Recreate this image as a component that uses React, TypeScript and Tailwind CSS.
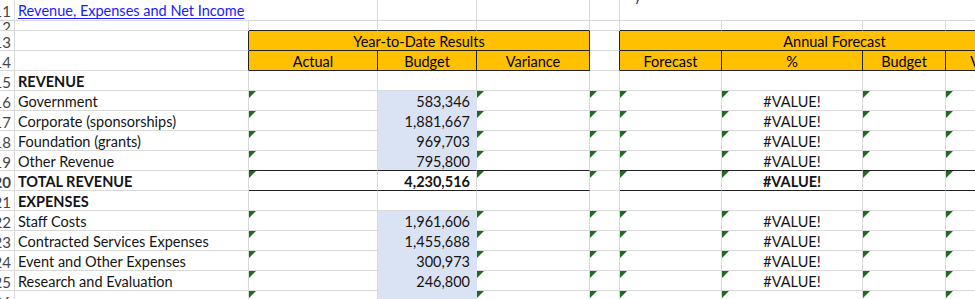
import React from "react";

const GRID =
  "grid grid-cols-[15px_234px_129px_99px_113px_30px_102px_141px_83px_104px]";

function Tri() {
  return (
    <svg
      width="7"
      height="7"
      viewBox="0 0 7 7"
      className="absolute left-0 top-0"
    >
      <polygon points="0,0 7,0 0,7" fill="#1d6b1d" />
    </svg>
  );
}

type CellProps = {
  children?: React.ReactNode;
  className?: string;
  tri?: boolean;
};

function Cell({ children, className = "", tri }: CellProps) {
  return (
    <div
      className={`relative flex items-center pt-[3px] overflow-hidden whitespace-nowrap ${className}`}
    >
      {tri && <Tri />}
      {children}
    </div>
  );
}

function RowNum({ n }: { n: number }) {
  return (
    <Cell className="justify-end pr-[3px] text-[15px] text-[#444] border-r border-b border-[#d9d9d9]">
      {n}
    </Cell>
  );
}

const G = "border-r border-b border-[#d9d9d9]";

function DataRow({
  n,
  label,
  budget,
  value,
}: {
  n: number;
  label: string;
  budget: string;
  value: string;
}) {
  return (
    <div className={`${GRID} h-[20px]`}>
      <RowNum n={n} />
      <Cell className={`${G} pl-[3px]`}>{label}</Cell>
      <Cell className={G} tri />
      <Cell className="justify-end pr-[6px] bg-[#dae3f3] border-r border-b border-[#dae3f3]">
        {budget}
      </Cell>
      <Cell className={G} tri />
      <Cell className={G} tri />
      <Cell className={G} tri />
      <Cell className={`${G} justify-center`} tri>
        {value}
      </Cell>
      <Cell className={G} tri />
      <Cell className={G} tri />
    </div>
  );
}

export default function App() {
  const revenue = [
    { n: 16, label: "Government", budget: "583,346" },
    { n: 17, label: "Corporate (sponsorships)", budget: "1,881,667" },
    { n: 18, label: "Foundation (grants)", budget: "969,703" },
  ];
  const expenses = [
    { n: 22, label: "Staff Costs", budget: "1,961,606" },
    { n: 23, label: "Contracted Services Expenses", budget: "1,455,688" },
    { n: 24, label: "Event and Other Expenses", budget: "300,973" },
    { n: 25, label: "Research and Evaluation", budget: "246,800" },
  ];
  const K = "border-r border-b border-[#d9d9d9] border-b-[#222]";
  const H = "bg-[#ffc000] border-r border-b border-[#222] justify-center text-black";

  return (
    <div className="w-[975px] h-[299px] overflow-hidden bg-white font-['Lato'] text-[14.5px] text-[#141414] leading-none">
      {/* row 11 */}
      <div className={`${GRID} h-[21px]`}>
        <RowNum n={11} />
        <Cell className="border-b border-[#d9d9d9] pl-[3px] overflow-visible">
          <span className="text-[#1a1aff] underline underline-offset-2">
            Revenue, Expenses and Net Income
          </span>
        </Cell>
        <Cell className={G} />
        <Cell className={G} />
        <Cell className={G} />
        <Cell className={G} />
        <Cell className="border-b border-[#d9d9d9] items-start">
          <span className="block -mt-[14px] ml-[14px] text-[#333]">y</span>
        </Cell>
        <Cell className="border-b border-[#d9d9d9]" />
        <Cell className="border-b border-[#d9d9d9]" />
        <Cell className="border-b border-[#d9d9d9]" />
      </div>
      {/* row 12 */}
      <div className={`${GRID} h-[10px]`}>
        <RowNum n={12} />
        <Cell className={G} />
        <Cell className={K} />
        <Cell className={K} />
        <Cell className={K} />
        <Cell className={G} />
        <Cell className={K} />
        <Cell className={K} />
        <Cell className={K} />
        <Cell className={K} />
      </div>
      {/* row 13 */}
      <div className={`${GRID} h-[20px]`}>
        <RowNum n={13} />
        <Cell className="border-r border-b border-[#d9d9d9] border-r-[#222]" />
        <Cell className={`${H} col-span-3`}>Year-to-Date Results</Cell>
        <Cell className="border-r border-b border-[#d9d9d9] border-r-[#222]" />
        <Cell className={`${H} col-span-4`}>Annual Forecast</Cell>
      </div>
      {/* row 14 */}
      <div className={`${GRID} h-[20px]`}>
        <RowNum n={14} />
        <Cell className="border-r border-b border-[#d9d9d9] border-r-[#222]" />
        <Cell className={H}>Actual</Cell>
        <Cell className={H}>Budget</Cell>
        <Cell className={H}>Variance</Cell>
        <Cell className="border-r border-b border-[#d9d9d9] border-r-[#222]" />
        <Cell className={H}>Forecast</Cell>
        <Cell className={H}>%</Cell>
        <Cell className={H}>Budget</Cell>
        <Cell className={H}>Variance</Cell>
      </div>
      {/* row 15 */}
      <div className={`${GRID} h-[20px]`}>
        <RowNum n={15} />
        <Cell className={`${G} pl-[3px] font-bold`}>REVENUE</Cell>
        <Cell className={G} />
        <Cell className={G} />
        <Cell className={G} />
        <Cell className={G} />
        <Cell className={G} />
        <Cell className={G} />
        <Cell className={G} />
        <Cell className={G} />
      </div>
      {revenue.map((r) => (
        <DataRow key={r.n} {...r} value="#VALUE!" />
      ))}
      {/* row 19 */}
      <div className={`${GRID} h-[20px]`}>
        <RowNum n={19} />
        <Cell className={`${G} pl-[3px]`}>Other Revenue</Cell>
        <Cell className={K} tri />
        <Cell className="justify-end pr-[6px] bg-[#dae3f3] border-r border-b border-[#dae3f3] border-b-[#222]">
          795,800
        </Cell>
        <Cell className={K} tri />
        <Cell className={G} tri />
        <Cell className={K} tri />
        <Cell className={`${K} justify-center`} tri>
          #VALUE!
        </Cell>
        <Cell className={K} tri />
        <Cell className={K} tri />
      </div>
      {/* row 20 */}
      <div className={`${GRID} h-[20px] font-bold`}>
        <RowNum n={20} />
        <Cell className={`${G} pl-[3px]`}>TOTAL REVENUE</Cell>
        <Cell className={K} tri />
        <Cell className={`${K} justify-end pr-[6px]`}>4,230,516</Cell>
        <Cell className={K} tri />
        <Cell className={G} tri />
        <Cell className={K} tri />
        <Cell className={`${K} justify-center`} tri>
          #VALUE!
        </Cell>
        <Cell className={K} tri />
        <Cell className={K} tri />
      </div>
      {/* row 21 */}
      <div className={`${GRID} h-[20px]`}>
        <RowNum n={21} />
        <Cell className={`${G} pl-[3px] font-bold`}>EXPENSES</Cell>
        <Cell className={G} />
        <Cell className={G} />
        <Cell className={G} />
        <Cell className={G} />
        <Cell className={G} />
        <Cell className={G} />
        <Cell className={G} />
        <Cell className={G} />
      </div>
      {expenses.map((r) => (
        <DataRow key={r.n} {...r} value="#VALUE!" />
      ))}
      <DataRow n={26} label="" budget="" value="" />
    </div>
  );
}
